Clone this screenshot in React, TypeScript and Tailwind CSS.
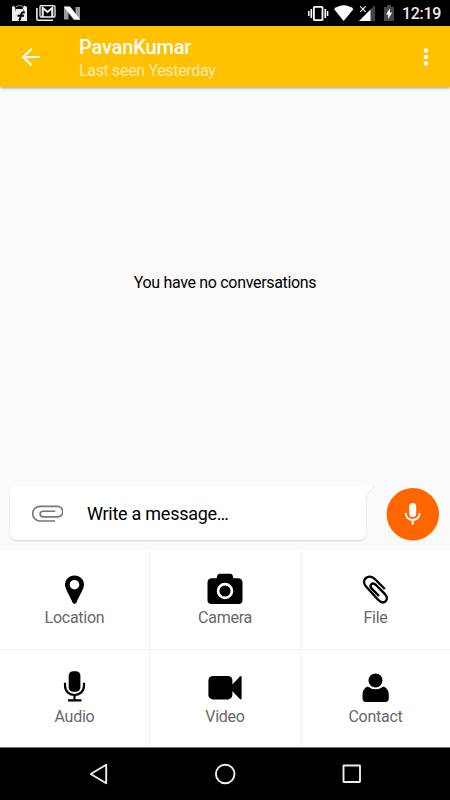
import type { ReactNode } from "react";

function StatusBar() {
  return (
    <header className="flex h-[26px] shrink-0 items-start bg-black pl-3 text-white">
      <svg className="mt-[4px] h-[18px] w-[17px] shrink-0" viewBox="0 0 17 18">
        <path d="M0 3 2 1.500 3.500 5h7L12 1.500l3 1.500V17H0Z" fill="#eee" />
        <path d="M4 3.500c0-2.500 7-2.500 7 0" fill="none" stroke="#aaa" strokeWidth="1" />
        <path d="M12.800 8.500c-3-.7-3.500 1-4.200 4.300-.3 1.700-.8 3-1.700 3.600M5.500 11.800h6.500" fill="none" stroke="#000" strokeWidth="2" />
        <path d="M3 6h1M11 6h1" stroke="#222" strokeWidth="1" />
      </svg>
      <svg className="ml-[7px] mt-[4px] h-[18px] w-[20px] shrink-0" viewBox="0 0 20 18" fill="none" stroke="#eee">
        <path d="M.9 4v11q0 1.200 1.200 1.200H17" strokeWidth="1.600" />
        <rect x="4" y="1.700" width="15" height="11.300" rx="1" strokeWidth="1.300" />
        <path d="M6.700 13V4l4.800 4 4.800-4v9" strokeWidth="2.100" />
      </svg>
      <svg className="ml-[8px] mt-[6px] h-[15px] w-[17px] shrink-0" viewBox="0 0 17 15">
        <path d="M0 1v12.500h4.500V5ZM11.500 1H16v12.500l-4.500-4Z" fill="#999" />
        <path d="M0 .8h6L16 13.500h-6Z" fill="#fff" stroke="#fff" strokeWidth=".5" />
      </svg>
      <svg className="ml-auto mt-[5px] h-[17px] w-[21px] shrink-0" viewBox="0 0 21 17" fill="none" stroke="#fff">
        <rect x="5.900" y="1.800" width="8.600" height="13.400" rx=".8" strokeWidth="1.800" />
        <path d="M3.300 4v9M17.300 4v9" strokeWidth="1.700" />
        <path d="M.8 6v5M19.600 6v5" strokeWidth="1.500" />
      </svg>
      <svg className="ml-[5px] mt-[5px] h-[17px] w-[20px] shrink-0" viewBox="0 0 20 17">
        <path d="M0 4Q9.700-3.500 19.500 4L9.700 16Z" fill="#fff" />
      </svg>
      <svg className="ml-[5px] mt-[4px] h-[18px] w-[17px] shrink-0" viewBox="0 0 17 18">
        <path d="M16 1v16H11V6Z" fill="#444" />
        <path d="M0 17 11.500 5.500V17Z" fill="#fff" />
        <path d="m1.200 2.300 5.500 5.500m0-5.500L1.200 7.800" stroke="#eee" strokeWidth="1.200" />
      </svg>
      <svg className="ml-[8px] mt-[4px] h-[18px] w-[10px] shrink-0" viewBox="0 0 10 18">
        <path d="M0 3h3V1h4v2h3v14H0Z" fill="#484848" />
        <path d="M5.900 4.300v4.200h2.200L4.100 15.300v-4.800H2Z" fill="#fff" />
      </svg>
      <span className="ml-[8px] mt-[2px] w-[48px] text-[16px] font-medium leading-[24px] tracking-[-0.3px] text-[#eee]">12:19</span>
    </header>
  );
}

function AppBar() {
  return (
    <div className="z-10 flex h-[61px] shrink-0 bg-[#ffc000] text-white shadow-[0_1px_3px_rgba(0,0,0,0.4)]">
      <svg className="ml-[21px] mt-[21px] h-5 w-5 shrink-0" viewBox="0 0 20 20" fill="none" stroke="#fff" strokeWidth="2.200">
        <path d="M18.700 10H2.500M10.500 1.800 2.300 10l8.200 8.200" />
      </svg>
      <div className="ml-[38px] mt-[9px] flex flex-col whitespace-nowrap">
        <h1 className="text-[20px] font-medium leading-[24px] tracking-[-0.15px]">PavanKumar</h1>
        <p className="text-[16px] leading-[24px] tracking-[-0.34px] text-white/70">Last seen Yesterday</p>
      </div>
      <svg className="ml-auto mr-[20px] mt-[21px] h-5 w-2 shrink-0" viewBox="0 0 8 20" fill="#fff">
        <circle cx="4" cy="3.500" r="2.300" />
        <circle cx="4" cy="10" r="2.300" />
        <circle cx="4" cy="16.500" r="2.300" />
      </svg>
    </div>
  );
}

function Composer() {
  return (
    <div className="flex h-[68px] shrink-0 pl-[10px]">
      <div className="relative mt-[4px] flex h-[54px] w-[356px] items-center rounded-[6px] rounded-tr-none bg-white shadow-[0_1px_2px_rgba(0,0,0,0.15)]">
        <svg className="ml-[21px] h-5 w-8" viewBox="0 0 32 20" fill="none" stroke="#777" strokeWidth="1.600">
          <path d="M24 18H9A7.300 7.300 0 0 1 9 3.400h17.500a5 5 0 0 1 0 10.500H12a2.800 2.800 0 0 1 0-5.700h12.300" />
        </svg>
        <span className="ml-[24px] whitespace-nowrap text-[18px] tracking-[-0.26px] text-black">Write a message…</span>
        <svg className="absolute left-[355px] top-0 h-[14px] w-[10px]" viewBox="0 0 10 14">
          <path d="M0 0h9L1 11v3H0Z" fill="#fff" />
          <path d="M9 0 1 11v3" fill="none" stroke="#e7e7e7" strokeWidth=".8" />
        </svg>
      </div>
      <button className="ml-[20px] mt-[5px] flex h-[54px] w-[54px] items-center justify-center" aria-label="Record">
        <svg className="h-[54px] w-[54px]" viewBox="0 0 54 54">
          <circle cx="26.800" cy="27.300" r="26.200" fill="#ff6600" />
          <rect x="23.200" y="16" width="7" height="14" rx="3.500" fill="#fff" />
          <path d="M19.700 26c0 9.300 14 9.300 14 0M26.700 32.500v5" fill="none" stroke="#fff" strokeWidth="2" />
        </svg>
      </button>
    </div>
  );
}

function Action({ label, wide = false, children }: { label: string; wide?: boolean; children: ReactNode }) {
  return (
    <button className="flex flex-col items-center bg-white pt-[19px] text-[#686868]">
      <svg className={wide ? "h-10 w-10 shrink-0" : "h-10 w-[39px] shrink-0"} viewBox={wide ? "0 0 40 40" : "0 0 39 40"} fill="#000">
        {children}
      </svg>
      <span className="-mt-[3px] text-[16px] leading-[22px] tracking-[-0.25px]">{label}</span>
    </button>
  );
}

function Actions() {
  return (
    <div className="grid h-[197px] shrink-0 grid-cols-[149px_150px_149px] grid-rows-[98px_97px] gap-px bg-[linear-gradient(#fcfcfc_0_1px,#f2f2f2_1px)] pt-px">
      <Action label="Location">
        <path fillRule="evenodd" d="M19.500 5.500c-5.400 0-9.500 4-9.500 9.300 0 4.500 5.500 12 7.500 17.800q2 2.800 4 0C23.500 26.800 29 19.300 29 14.800c0-5.300-4.100-9.300-9.500-9.300Zm0 4.400a4.800 4.800 0 1 1 0 9.600 4.800 4.800 0 0 1 0-9.600Z" />
      </Action>
      <Action label="Camera" wide>
        <path d="M14.500 3.700h11q2 0 2.500 3l.4 1.600H33q4.500 0 4.500 4.500V30q0 4-4 4h-27q-4 0-4-4V12.800q0-4.500 4.500-4.500h4.600l.4-1.600q.5-3 2.500-3Z" />
        <circle cx="20" cy="21" r="6.900" fill="none" stroke="#fff" strokeWidth="2.700" />
      </Action>
      <Action label="File">
        <path d="M28.800 19 18.800 9C12.500 3 4.500 9.800 9.800 16.300L22.500 30.200c5.800 5.300 11.300-.8 6.500-6L20 15c-4-3.500-7.200.2-4.200 3.700l7.200 7.300" fill="none" stroke="#000" strokeWidth="2.400" />
      </Action>
      <Action label="Audio">
        <rect x="13.700" y="2.300" width="11.700" height="20.500" rx="4.500" />
        <path d="M10 13.800v2.800c0 12.500 19 12.500 19 0v-2.800M19.500 26.300v5M13 31.400h13.500" fill="none" stroke="#000" strokeWidth="2.200" />
      </Action>
      <Action label="Video" wide>
        <rect x="3.400" y="6.900" width="24" height="23.500" rx="4.500" />
        <path d="M26 16.700 35 7.400q1.600-1 1.600.8v21q0 2-1.700.8L26 20.700Z" />
      </Action>
      <Action label="Contact">
        <circle cx="19.500" cy="11.500" r="7" />
        <path d="M11.500 17.500q8 5.500 16 0 5.300 2 5.300 8.500v3.300q0 3.600-3.500 3.600H10q-3.500 0-3.500-3.600v-3.300q0-6.500 5-8.500Z" />
      </Action>
    </div>
  );
}

function NavigationBar() {
  return (
    <nav className="flex h-[53px] shrink-0 items-center border-t border-[#777] bg-black">
      <svg className="ml-[88px] h-6 w-6" viewBox="0 0 24 24" fill="none" stroke="#eee" strokeWidth="1.900" strokeLinejoin="round">
        <path d="M18.200 2.700v18.600L2.700 12Z" />
      </svg>
      <svg className="ml-[101px] h-6 w-6" viewBox="0 0 24 24" fill="none" stroke="#eee" strokeWidth="1.900">
        <circle cx="12.200" cy="12" r="9.300" />
      </svg>
      <svg className="ml-[103px] h-6 w-6" viewBox="0 0 24 24" fill="none" stroke="#eee" strokeWidth="1.900">
        <rect x="3.500" y="3.500" width="16.500" height="16.500" rx=".4" />
      </svg>
    </nav>
  );
}

export default function App() {
  return (
    <div className="flex h-[800px] w-[450px] flex-col overflow-hidden bg-[#fafafa] font-['Roboto','Noto_Sans',sans-serif]">
      <StatusBar />
      <AppBar />
      <main className="flex min-h-0 flex-1 justify-center pt-[185px]">
        <p className="text-[16px] leading-[22px] tracking-[-0.32px] text-black">You have no conversations</p>
      </main>
      <Composer />
      <Actions />
      <NavigationBar />
    </div>
  );
}
